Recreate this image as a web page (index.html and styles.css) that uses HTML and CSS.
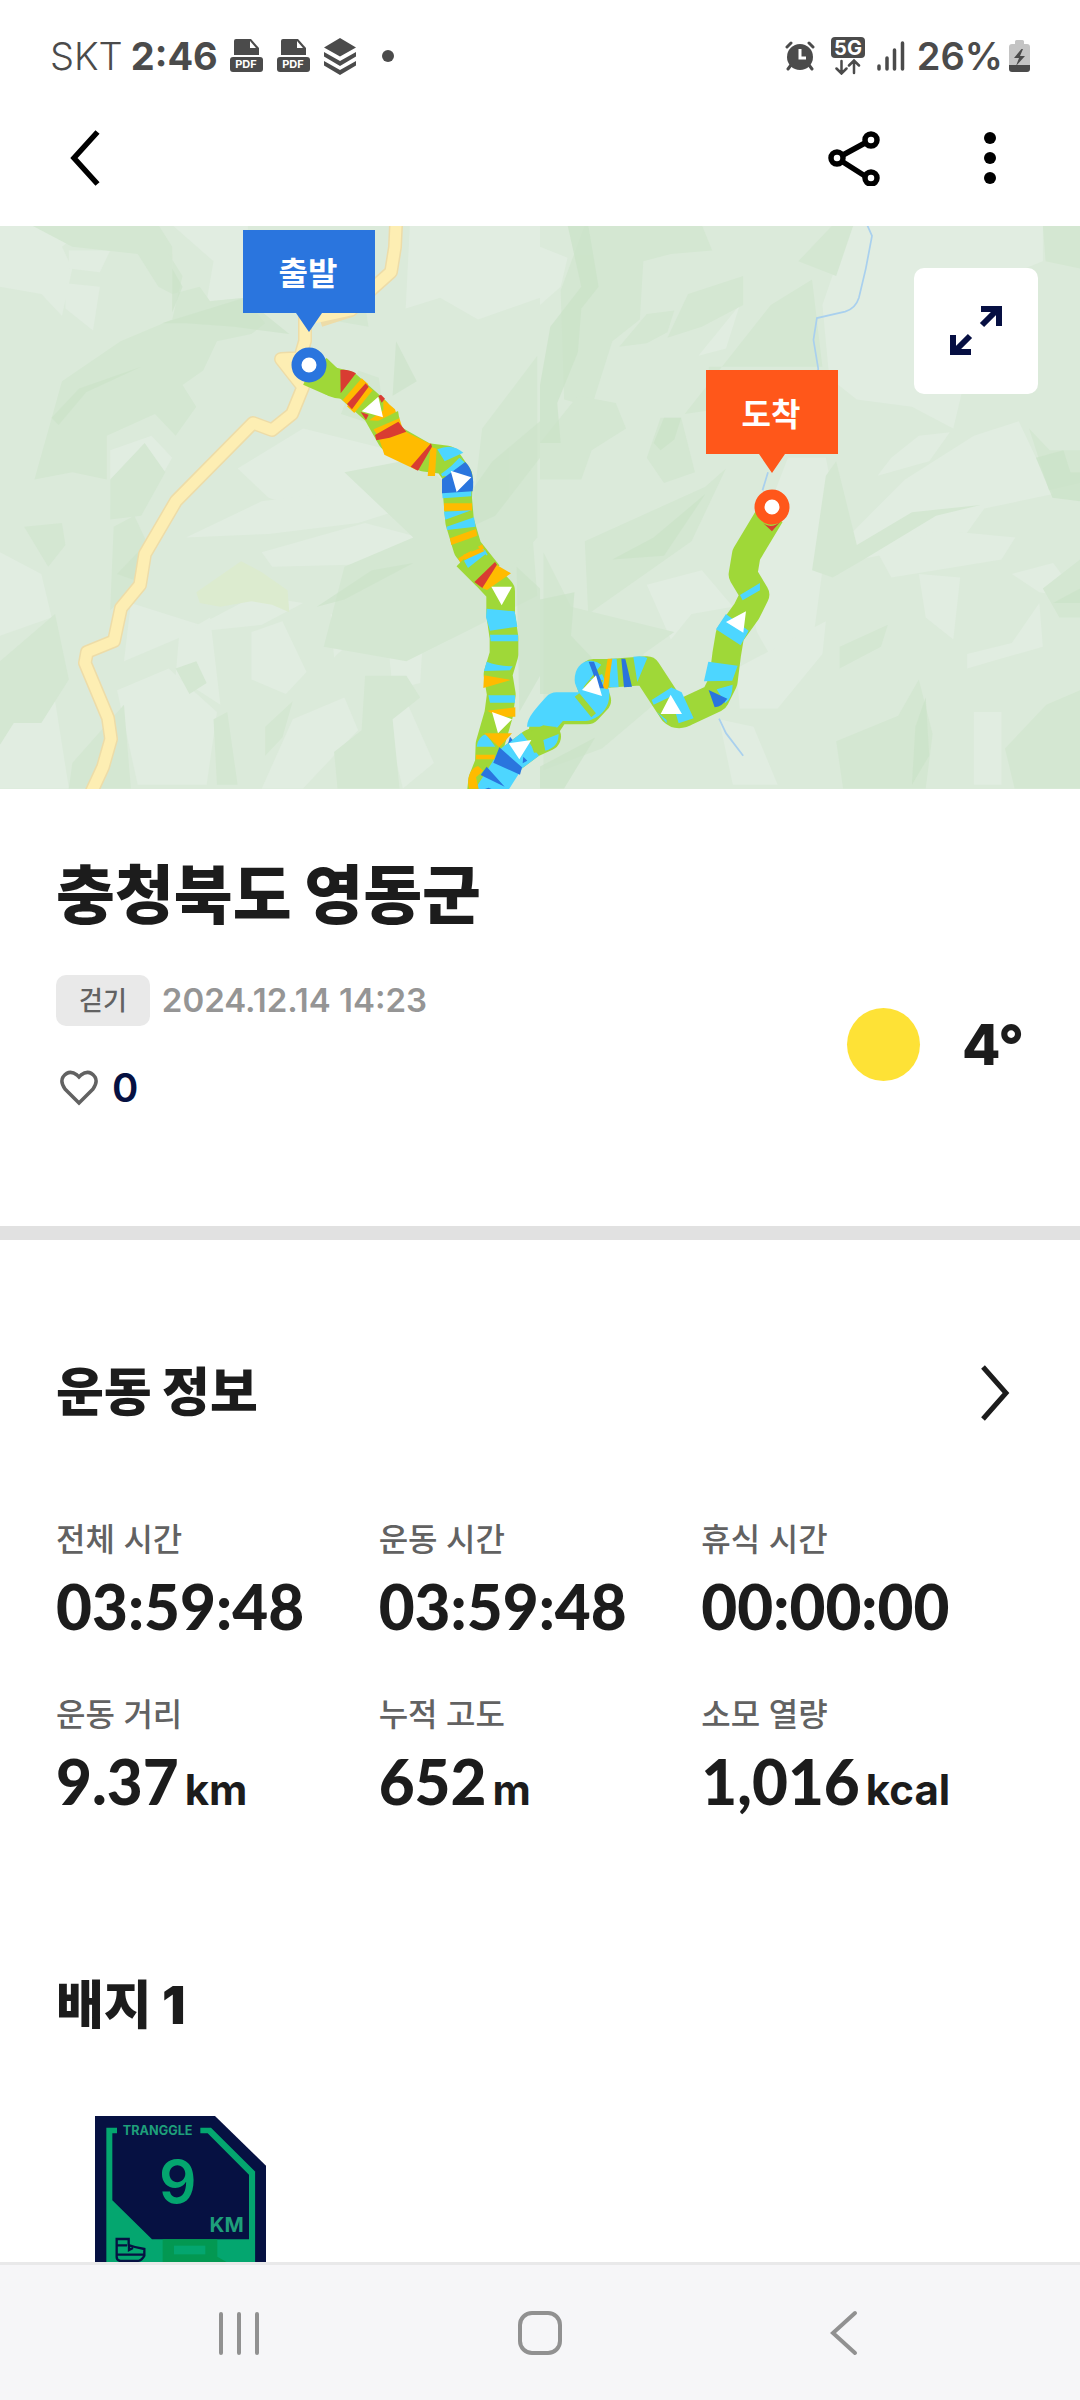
FILE: index.html
```html
<!DOCTYPE html>
<html lang="ko">
<head>
    <meta charset="UTF-8">
    <meta name="viewport" content="width=device-width, initial-scale=1.0">
    <title>충청북도 영동군</title>
    <link rel="stylesheet" href="styles.css">
</head>
<body>
    <!-- Status bar -->
    <div class="status-bar">
        <div class="status-left">
            <span class="carrier">SKT</span>
            <span class="clock">2:46</span>
            <svg class="icon-pdf" width="34" height="34" viewBox="0 0 34 34">
                <path d="M4 2a2 2 0 0 1 2-2h15l8 9v7H4z" fill="#4b4b4b"/>
                <path d="M20 2v7h6z" fill="#fff"/>
                <rect x="0" y="18" width="33" height="15" rx="3" fill="#4b4b4b"/>
                <text x="16" y="29" class="pdf-text">PDF</text>
            </svg>
            <svg class="icon-pdf" width="34" height="34" viewBox="0 0 34 34">
                <path d="M4 2a2 2 0 0 1 2-2h15l8 9v7H4z" fill="#4b4b4b"/>
                <path d="M20 2v7h6z" fill="#fff"/>
                <rect x="0" y="18" width="33" height="15" rx="3" fill="#4b4b4b"/>
                <text x="16" y="29" class="pdf-text">PDF</text>
            </svg>
            <svg class="icon-layers" width="32" height="37" viewBox="0 0 32 37" fill="#4b4b4b">
                <path d="M16 0l16 9.500-16 9L0 9.500zM0 14l16 9 16-9v4.500L16 28 0 18.500zM0 23l16 9 16-9v4.500L16 37 0 27.500z"/>
            </svg>
            <svg class="icon-dot" width="12" height="12" viewBox="0 0 12 12"><circle cx="6" cy="6" r="6" fill="#4b4b4b"/></svg>
        </div>
        <div class="status-right">
            <svg class="icon-alarm" width="30" height="30" viewBox="0 0 30 30">
                <g fill="none" stroke="#4b4b4b" stroke-width="3" stroke-linecap="round">
                    <path d="M2 6l4-4M28 6l-4-4M6 24l-3 4M24 24l3 4"/>
                </g>
                <circle cx="15" cy="16" r="13" fill="#4b4b4b"/>
                <path d="M15 8v9h6" fill="none" stroke="#fff" stroke-width="3"/>
            </svg>
            <svg class="icon-5g" width="34" height="38" viewBox="0 0 34 38">
                <rect x="0" y="0" width="34" height="21" rx="4" fill="#4b4b4b"/>
                <text x="17" y="18" class="five-g">5G</text>
                <path d="M10.500 24v12M5.500 31.500l5 5 5-5M23 36V24M18 28.500l5-5 5 5" fill="none" stroke="#4b4b4b" stroke-width="2.500" stroke-linecap="round"/>
            </svg>
            <svg class="icon-signal" width="28" height="30" viewBox="0 0 28 30" fill="none" stroke="#4b4b4b" stroke-width="3.500" stroke-linecap="round">
                <path d="M2 25v3M10 17v11M17.500 9v19M25.500 2v26"/>
            </svg>
            <span class="percent">26%</span>
            <svg width="21" height="32" viewBox="0 0 21 32">
                <path d="M6 1.500A1.500 1.500 0 0 1 7.500 0h6A1.500 1.500 0 0 1 15 1.500V4h3a3 3 0 0 1 3 3v18H0V7a3 3 0 0 1 3-3h3z" fill="#c4c4c4"/>
                <path d="M0 25h21v4a3 3 0 0 1-3 3H3a3 3 0 0 1-3-3z" fill="#4b4b4b"/>
                <path d="M12.500 9L5 18h5L7 26l9-10h-5l3-7z" fill="#4b4b4b"/>
            </svg>
        </div>
    </div>

    <!-- App header -->
    <header class="app-header">
        <button class="icon-button" type="button" aria-label="뒤로">
            <svg width="30" height="56" viewBox="0 0 30 56" fill="none" stroke="#000" stroke-width="5.500"><path d="M27.500 2L4 28l23.500 26"/></svg>
        </button>
        <div class="header-actions">
            <button class="icon-button" type="button" aria-label="공유">
                <svg width="52" height="56" viewBox="0 0 52 56" fill="none" stroke="#000" stroke-width="5.500">
                    <path d="M15 25l22-12M15 32l22 14"/>
                    <circle cx="9" cy="28" r="6"/>
                    <circle cx="43" cy="10" r="6"/>
                    <circle cx="43" cy="48" r="6"/>
                </svg>
            </button>
            <button class="icon-button" type="button" aria-label="더보기">
                <svg width="12" height="56" viewBox="0 0 12 56"><circle cx="6" cy="8" r="6"/><circle cx="6" cy="28" r="6"/><circle cx="6" cy="48" r="6"/></svg>
            </button>
        </div>
    </header>

    <main class="content">
        <!-- Route map -->
        <section class="map">
            <svg class="map-canvas" viewBox="0 0 1080 563" preserveAspectRatio="xMidYMid slice">
                <rect width="1080" height="563" fill="#dbeada"/>
                <!-- terrain, west half -->
                <g transform="translate(0 -1) scale(.3444 .3635)">
                    <g fill="#e1ede1">
                        <path d="M0 0h260l-80 60 30 60-30 130-60-60L0 170z"/>
                        <path d="M200 70h120l-30 60-90-10zM190 160l100 10-20 120-80-60z"/>
                        <path d="M500 0h220v200l-120 10 20-110z"/>
                        <path d="M1190 0h378v200l-180 60-110-60-100 30z"/>
                        <path d="M880 560l300 70 60 60-120 40-200 60-140-40-90-80z"/>
                        <path d="M540 860l220-100 240-30 180-30 60 60-200 60-260 30z"/>
                        <path d="M760 900l300-80 240 60-80 50-430 10z"/>
                        <path d="M320 620l120-40 60 60-60 100-120 30z"/>
                        <path d="M380 1040l200 60 160-80 140 20-120 60-200 20-200 80z"/>
                        <path d="M520 1130l90-50 30 240-130-80zM730 1120l90-30 70 140-60 60-100-40z"/>
                        <path d="M1130 1180l100-70-10 150-80 20zM960 1070l100 40-90 80z"/>
                        <path d="M0 900l120 60 30 120-150 50zM40 1280l120 30 40 240H0l-20-120z"/>
                        <path d="M340 1280l150-60 140 120-30 200H400z"/>
                        <path d="M1120 1360l60-50 80 170-90 70zM850 1360l150-60 40 90-160 160H760z"/>
                    </g>
                    <g fill="#d4e7d2">
                        <path d="M90 0h170l200 0 40 60 0 130-40-20-60-90-190-20z"/>
                        <path d="M390 80h110v110l80-20 30 40 100-10 60 70-40 30-100 20-40 80-60 40 40 60-60 80-60-60-140 60 0 120-100-20-110 20 80-270 170-110 150-60 30-120-40-60z"/>
                        <path d="M320 700l100-100 60 80-70 120-90 10zM70 830l110-10 10 60-50 60z"/>
                        <path d="M330 830l60-30 40 80-40 120-70 60z"/>
                        <path d="M0 1200l160-130 40 180-80 120-80 0-40 60z"/>
                        <path d="M950 100l100 60 20 120-120-20zM1040 400l60 20 20 140-130-40z"/>
                        <path d="M1000 680l220-40 160 160 160-20 20 240-380 180-240-40 60-220 200-80z"/>
                        <path d="M1400 560l160-200v500l-90 100-100-160z"/>
                        <path d="M1060 1240l120 0 40 60-80 60 20 190h-180l-10-100 80-60z"/>
                        <path d="M620 1360l40-20 30 200h-60zM770 1380l80-70-30 100-50 50z"/>
                        <path d="M510 1220l60-20 30 60-50 30zM210 1480l150-160 20 230H200z"/>
                    </g>
                    <g fill="#cbe3c8" opacity=".6">
                        <path d="M470 270l240-70 130 100-160-20-140-10zM500 120l30 50-30 70z"/>
                        <path d="M150 530l80-80 180-60-160 70-80 90z"/>
                        <path d="M1370 730l60-80 138-110v100l-130 160-70 30z"/>
                        <path d="M920 1050l160-100 120-20-200 100zM1150 320l60 110-70 40z"/>
                        <path d="M1500 940l68 60v240l-60 100zM340 960l60-60 0 80z"/>
                    </g>
                    <path d="M570 1010l130-85 60 30 75 50 5 60-50-20-60-10-90 15-60-10z" fill="#dcebcf"/>
                </g>
                <!-- terrain, east half -->
                <g transform="translate(540 -1) scale(.3444 .3635)">
                    <g fill="#e1ede1">
                        <path d="M0 60l80 30-20 80-60 50zM900 0h560v100l-160 60-100 400-120-60-160-20-80-60-20-200z"/>
                        <path d="M1060 700l200-120 130-40 100 200-200 40-60 80-300 60-60-40z"/>
                        <path d="M720 640h110l20 100-60 420-100 60-60-100-40-160z"/>
                        <path d="M980 900l180-60 220 20-40 60-320 50zM1100 960l120 10-20 170-80-60z"/>
                        <path d="M1240 1180l130-30 80-110 10 120-220 60zM1370 960l120-30 80 100-120-20z"/>
                        <path d="M310 990l160-40 90 100-120 20-60 70zM570 1220l260-130-10 90-130 150-110 0z"/>
                        <path d="M970 1440l120-90-100 110zM1260 1340h80v200h-80zM520 1360l100 20 70 160H560z"/>
                        <path d="M460 360l120-140-40 120zM1020 640l80-60 90-10-60 80-150 40z"/>
                    </g>
                    <g fill="#d4e7d2">
                        <path d="M130 0h340l30 70-120 10-80 20-10 160-80 60-60 180-80-20-10-300z"/>
                        <path d="M750 100l100-100h60l-50 140z"/>
                        <path d="M370 310l60-120 160-50v80l-120 60zM230 335l80-90 80-10-20 60-60 30z"/>
                        <path d="M420 520l250-300 120-70 30 240H490v120z"/>
                        <path d="M0 600l110-130 110 20 30 70-100 60-30 80-120 0z"/>
                        <path d="M830 690l30-40 60 230 160-90 200-20-130 30-210 120-90 50-60-20z"/>
                        <path d="M870 1160l140-60-20 60-120 60zM860 1420l180-70 60-100 40 150-20 150H880z"/>
                        <path d="M1420 560l60 60 88 0v90l-90 20zM1460 1000l108-80v160l-60 0z"/>
                        <path d="M310 640l40-110 60 0 40 150-90 30zM480 720l60-50-100 200-300 200-10-200z"/>
                        <path d="M90 1050l300 70-90 60 30 140-150 120-170 60V900z"/>
                        <path d="M1350 1440l120-120 98-40v270h-190z"/>
                        <path d="M1460 0h108v120l-100-20z"/>
                    </g>
                    <g fill="#cbe3c8" opacity=".7">
                        <path d="M80 0h60l30 170-50 60-10 120-60 140 10 110H0V440l30-160 90-110z"/>
                        <path d="M330 600l30-70 50 0-20 60-40 30zM1440 640l80-20 20 60 28 0v80l-80-10z"/>
                        <path d="M1490 1040l78-40v40zM1090 1380l30-80 10 160-50 80z"/>
                        <path d="M0 1030l100-20-10 120 60 60-20 100H0zM210 920l120-60 150-120-120 170z"/>
                        <path d="M0 1490l160-80-90 140H0z"/>
                    </g>
                    <g fill="none" stroke="#a9d0ee" stroke-width="5">
                        <path d="M950 0l14 30-18 90-20 80q-10 30-40 38l-82 18-10 60 14 80-5 20M662 680l-16 50"/>
                        <path d="M520 1358l20 40 50 62"/>
                    </g>
                </g>
                <!-- roads -->
                <g fill="none" stroke-linejoin="round">
                    <path d="M396-1l-1 22-4 25-19 17-21 21-31 10M305 90v25l-5 17-19 1 22 28-11 27-20 16-19-7-77 78-31 53-5 31-19 23-7 33-27 11-2 11 23 55 3 21-8 28-12 26" stroke="#eddca8" stroke-width="14"/>
                    <path d="M396-1l-1 22-4 25-19 17-21 21-46 10v21l-5 17-19 1 22 28-11 27-20 16-19-7-77 78-31 53-5 31-19 23-7 33-27 11-2 11 23 55 3 21-8 28-12 26M300 132l3 29" stroke="#fdeeb3" stroke-width="11"/>
                </g>
                <!-- track, first stretch -->
                <g transform="translate(270 104) scale(.3333)">
                    <path d="M117 125l63 28 50 12 90 80 45 80 100 57 65 8 35 50-2 65 6 70 24 80 62 78" fill="none" stroke="#9fd838" stroke-width="86" stroke-linejoin="round"/>
                    <path d="M130 110l40-26 40 38 4 84q-40 0-68-30z" fill="#9fd838"/>
                    <g fill="#ffbb00">
                        <path d="M275 145l20 18-55 68-22-20zM288 165l20 16-55 68-22-20zM340 208l35 30 12 38-90-5 43-30zM305 290l82-30 15 50-75 12zM327 325l80-20 76 38-42 78-98-47zM482 350l18 6-5 82h-22zM522 520h84v22h-84zM540 625l78-28 4 20-78 28zM565 685l72-42 8 22-72 38z"/>
                    </g>
                    <g fill="#9fd838"><path d="M300 285l84-42 4 22-84 36z"/></g>
                    <g fill="#d93c32">
                        <path d="M211 120q25-3 47 10l-46 60zM287 160l9 10-50 68-15-16zM325 198l8-4 12 12-10 12zM272 246l24 8-8 16zM315 315l70-40 24 30-50 18-40 8zM483 340l3 10-42 72-22-12z"/>
                    </g>
                    <g fill="#4dd6ff">
                        <path d="M502 358q45-20 78 10l-56 26zM555 400l25-20-62 60-5-8zM516 485l88-2v16l-86 6zM522 545l82-4-78 28zM530 590l82-28 5 28-86 10zM575 700l70-40 8 14-62 46z"/>
                        <path d="M518 435l50-52 16 14-50 45z"/>
                    </g>
                    <path d="M516 448l70-52q30 30 22 88l-92 6z" fill="#2a75de"/>
                    <g fill="#fff"><path d="M325 200l14 62-64-18zM542 422l62 20-44 44z"/></g>
                </g>
                <!-- track, valley crossing and way to the finish -->
                <g transform="translate(460 324) scale(.3333)">
                    <g fill="none" stroke-width="86" stroke-linejoin="round">
                        <path d="M20 18l60 60 42 45 0 70 10 70 0 50-18 60 10 60-8 60-26 90-2 57-20 50-6 60" stroke="#9fd838"/>
                        <path d="M85 715l70-90 60-45 45-20-10-20 40-60h92l28-30-18-50 8-30 50 0 110-8 80 122q15 15 40 0l85-40 25-50 10-80 10-60 50-70 25-50-36-60 10-60 72-120" stroke="#9fd838"/>
                        <path d="M85 735l70-110 56-42M244 530q0-10 46-60h87q30-10 28-40l-18-40q0-20 10-12" stroke="#4dd6ff"/>
                    </g>
                    <g fill="#9fd838"><path d="M200 550l50-24 50 8-12 24-36 12 10 34-40 4-8-24-14-24zM344 440l14-10 50 60-14 12z"/></g>
                    <g fill="#4dd6ff">
                        <path d="M12 32l58-35 8 14L24 54zM80 176l84 8 8 46-82 12-12-40zM90 254h84v20H92zM80 335q30 12 78 14l-8 12-78 2zM85 436h80v22H90zM50 590q4-30 28-38l28 38zM250 570l46-18q0 40-40 50z"/>
                        <path d="M452 326h18l6 86h-28zM520 320q30-4 42 4l-30 72zM575 450l60-38 18 18-72 34zM640 415l25 12 36 78-45 15-26-90zM590 485l30 25 0 10zM840 135l60-36v22l-52 30zM798 192l68 50-24 44-74-48zM745 335l88 12-16 45-85 2zM770 418l48-14q0 40-22 56z"/>
                    </g>
                    <g fill="#ffbb00">
                        <path d="M10 14L60-5l14 8L14 30zM105 42l48 28-72 50-14-6zM72 376l80 14-82 24zM82 482l84-10v28l-50 0zM72 550h84l-38 42zM48 614h56v14H48zM30 670q8-18 24-22l16 14-22 20 8 34-28 0q-8-20 2-46z"/>
                        <path d="M443 326h14l-14 92-15-4z"/>
                    </g>
                    <path d="M105 36l6 8-44 70-24-18z" fill="#d93c32"/>
                    <path d="M910-80q25 20 54-8l-28 32z" fill="#d93c32"/>
                    <g fill="#2a75de"><path d="M118 592l68 60-6 22-80-36zM80 650l54 60-72-35zM150 560l8 10-14 12zM188 640l14-8-12-12zM386 335h16l30 80h-16zM484 326h12l20 84-24 2zM746 420l56 26q-14 22-38 26zM75 717l10-4 10 4z"/></g>
                    <g fill="#fff"><path d="M94 110h62l-31 56zM96 486l60 22-42 42zM146 580l68-10-36 58zM408 376l18 62-60-18zM632 434l34 58h-64zM858 184l-8 64-52-32z"/></g>
                </g>
                <!-- start marker -->
                <path d="M243 4h132v83h-53l-13 19-13-19h-53z" fill="#2a75de"/>
                <circle cx="309" cy="139" r="12.500" fill="#fff" stroke="#2a75de" stroke-width="10"/>
                <text x="308" y="59" class="marker-text">출발</text>
                <!-- finish marker -->
                <path d="M706 144h132v84h-53l-13 19-13-19h-53z" fill="#ff571a"/>
                <circle cx="772" cy="281" r="12.500" fill="#fff" stroke="#ff571a" stroke-width="10"/>
                <text x="771" y="200" class="marker-text">도착</text>
            </svg>
            <button class="expand-button" type="button" aria-label="지도 확대">
                <svg width="52" height="52" viewBox="0 0 52 52" fill="none" stroke="#060f42" stroke-width="6">
                    <path d="M31 4h18v17M48 4L32 20M21 47H3V30M4 47l16-16"/>
                </svg>
            </button>
        </section>

        <!-- Activity summary -->
        <section class="summary">
            <h1>충청북도 영동군</h1>
            <div class="summary-row">
                <div class="summary-info">
                    <div class="meta">
                        <span class="tag">걷기</span>
                        <time datetime="2024-12-14T14:23">2024.12.14 14:23</time>
                    </div>
                    <button class="like-button" type="button" aria-label="좋아요">
                        <svg width="38" height="36" viewBox="0 0 38 36" fill="none" stroke="#626262" stroke-width="3.500"><path d="M19 33L5 19Q0 12 3 7q6-8 14-2l2 2 2-2q8-6 14 2 3 5-2 12z"/></svg>
                        <span>0</span>
                    </button>
                </div>
                <div class="weather">
                    <span class="sun"></span>
                    <span class="temperature">4°</span>
                </div>
            </div>
        </section>

        <!-- Exercise info -->
        <section class="exercise">
            <div class="section-header">
                <h2>운동 정보</h2>
                <button class="icon-button" type="button" aria-label="운동 정보 더보기">
                    <svg width="30" height="56" viewBox="0 0 30 56" fill="none" stroke="#1c1c1c" stroke-width="5"><path d="M3 2l23 26L3 54"/></svg>
                </button>
            </div>
            <dl class="stats">
                <div class="stat"><dt>전체 시간</dt><dd>03:59:48</dd></div>
                <div class="stat"><dt>운동 시간</dt><dd>03:59:48</dd></div>
                <div class="stat"><dt>휴식 시간</dt><dd>00:00:00</dd></div>
                <div class="stat"><dt>운동 거리</dt><dd>9.37<span class="unit">km</span></dd></div>
                <div class="stat"><dt>누적 고도</dt><dd>652<span class="unit">m</span></dd></div>
                <div class="stat"><dt>소모 열량</dt><dd>1,016<span class="unit">kcal</span></dd></div>
            </dl>
        </section>

        <!-- Badges -->
        <section class="badges">
            <h2>배지 1</h2>
            <svg class="badge" width="171" height="200" viewBox="284 518 513 600">
                <path d="M284 518h360l153 149v451H284z" fill="#061142"/>
                <path d="M318 553h32v17h-14v201l119 117h291V694L622 570h-22v-17h32l133 132v400H318z" fill="#04a66f"/>
                <path d="M487 888h164v52l120 70v108H487z" fill="#039852"/>
                <path d="M521 907h94v26h-94z" fill="#04a66f"/>
                <path d="M765 685v433h32V667z" fill="#061142"/>
                <path d="M349 887h36v18q20 8 47 12v20q-8 16-24 16h-48q-11-2-11-12zM350 906h30M350 934h80M386 908v12l12-6" fill="none" stroke="#061142" stroke-width="7"/>
                <text x="472" y="576" class="badge-brand">TRANGGLE</text>
                <text x="532" y="780" class="badge-number">9</text>
                <text x="679" y="866" class="badge-unit">KM</text>
            </svg>
        </section>
    </main>

    <!-- System navigation -->
    <nav class="system-nav">
        <button type="button" aria-label="최근 앱">
            <svg width="44" height="46" viewBox="0 0 44 46" fill="none" stroke="#919191" stroke-width="4" stroke-linecap="round"><path d="M4 4v39M22 4v39M40 4v39"/></svg>
        </button>
        <button type="button" aria-label="홈">
            <svg width="44" height="46" viewBox="0 0 44 46" fill="none" stroke="#919191" stroke-width="4"><rect x="2" y="3" width="40" height="40" rx="12"/></svg>
        </button>
        <button type="button" aria-label="이전">
            <svg width="44" height="46" viewBox="0 0 44 46" fill="none" stroke="#919191" stroke-width="4" stroke-linecap="round"><path d="M36 3L14 23l22 20"/></svg>
        </button>
    </nav>
</body>
</html>
```

FILE: styles.css
```css
* {
    box-sizing: border-box;
}

body {
    font-family: Inter, "Noto Sans CJK KR", sans-serif;
    background-color: #fff;
    color: #1c1c1c;
    margin: 0;
    height: 100vh;
    display: flex;
    flex-direction: column;
}

button {
    display: flex;
    align-items: center;
    padding: 0;
    background: none;
    border: none;
    font-family: inherit;
    cursor: pointer;
}

svg {
    display: block;
    flex: none;
}

/* Status bar */
.status-bar {
    display: flex;
    justify-content: space-between;
    align-items: center;
    height: 112px;
    padding: 0 50px;
    color: #4b4b4b;
    font-size: 38px;
    line-height: 48px;
}

.status-left,
.status-right {
    display: flex;
    align-items: center;
}

.carrier {
    font-weight: 300;
    margin-right: 8px;
}

.clock {
    font-weight: 700;
    margin-right: 12px;
}

.percent {
    font-weight: 600;
    margin-right: 6px;
}

.icon-pdf {
    margin-right: 13px;
}

.icon-layers {
    margin-right: 26px;
}

.icon-alarm {
    margin-right: 16px;
}

.icon-5g,
.icon-signal {
    margin-right: 12px;
}

.pdf-text {
    fill: #fff;
    font-size: 11px;
    font-weight: 700;
    text-anchor: middle;
}

.five-g {
    fill: #fff;
    font-size: 20px;
    font-weight: 700;
    text-anchor: middle;
}

/* App header */
.app-header {
    display: flex;
    justify-content: space-between;
    align-items: center;
    height: 114px;
    padding: 0 84px 22px 70px;
}

.header-actions {
    display: flex;
    gap: 104px;
}

.content {
    flex: 1;
    min-height: 0;
    overflow-y: auto;
    scrollbar-width: none;
}

/* Map */
.map {
    position: relative;
}

.map-canvas {
    width: 100%;
    aspect-ratio: 1080 / 563;
}

.marker-text {
    fill: #fff;
    font-size: 32px;
    font-weight: 700;
    text-anchor: middle;
}

.expand-button {
    position: absolute;
    top: 42px;
    right: 42px;
    width: 124px;
    height: 126px;
    justify-content: center;
    background-color: #fff;
    border-radius: 10px;
}

/* Summary */
.summary {
    padding: 58px 56px 112px;
    border-bottom: 14px solid #e1e1e1;
}

h1,
h2 {
    margin: 0;
    font-weight: 900;
}

h1 {
    font-size: 64px;
    line-height: 96px;
}

.summary-row {
    display: flex;
    justify-content: space-between;
    align-items: center;
    margin-top: 32px;
}

.meta {
    display: flex;
    align-items: center;
    gap: 12px;
    color: #959595;
    font-size: 33px;
    font-weight: 600;
    line-height: 51px;
}

.tag {
    padding: 0 23px;
    background-color: #e9e9e9;
    border-radius: 10px;
    color: #626262;
    font-size: 26px;
    font-weight: 500;
}

.like-button {
    gap: 14px;
    margin-top: 36px;
    padding-left: 4px;
    color: #061142;
    font-size: 40px;
    font-weight: 600;
    line-height: 52px;
}

.weather {
    display: flex;
    align-items: center;
    gap: 42px;
}

.sun {
    width: 73px;
    height: 73px;
    background-color: #fee236;
    border-radius: 50%;
}

.temperature {
    font-size: 56px;
    font-weight: 800;
    line-height: 64px;
}

/* Exercise info */
.exercise {
    padding: 114px 56px 0;
}

.section-header {
    display: flex;
    justify-content: space-between;
    align-items: center;
    padding-right: 14px;
}

h2 {
    font-size: 52px;
    line-height: 78px;
}

.stats {
    display: grid;
    grid-template-columns: repeat(3, 1fr);
    row-gap: 43px;
    margin: 84px 0 0;
}

dt {
    color: #626262;
    font-size: 32px;
    font-weight: 500;
    line-height: 48px;
}

dd {
    margin: 0;
    font-family: Lato, sans-serif;
    font-size: 62px;
    font-weight: 900;
    line-height: 84px;
}

.unit {
    margin-left: 6px;
    font-family: Inter, sans-serif;
    font-size: 42px;
    font-weight: 700;
}

/* Badges */
.badges {
    padding: 135px 56px 0;
}

.badge {
    margin: 71px 0 0 39px;
}

.badge-brand,
.badge-number,
.badge-unit {
    fill: #1e9f7a;
    font-size: 38px;
    font-weight: 700;
    text-anchor: middle;
}

.badge-number {
    fill: #04a66f;
    font-size: 176px;
    font-weight: 600;
}

.badge-unit {
    font-size: 62px;
}

/* System navigation */
.system-nav {
    display: flex;
    justify-content: space-around;
    align-items: center;
    height: 138px;
    padding: 0 88px;
    background-color: #f6f6f8;
    border-top: 3px solid #e9e9ea;
}
```
